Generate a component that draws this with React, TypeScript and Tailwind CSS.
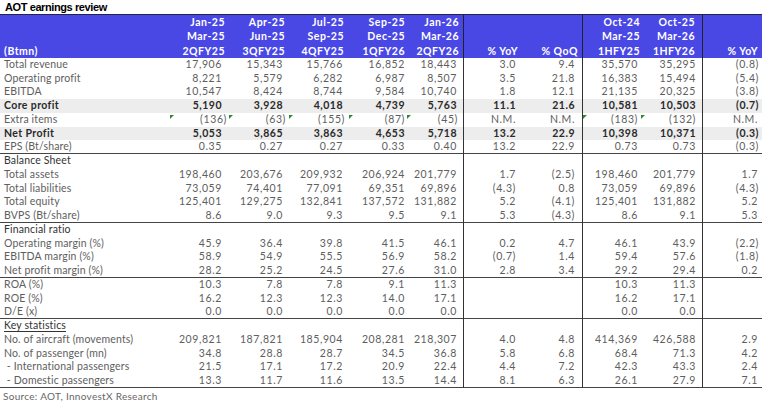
const grid = "grid grid-cols-[170px_59px_60px_60px_58px_56px_60px_59px_59px_61px_60px]";

// right padding per data column, and a smaller one for values in brackets
const padPos = ["pr-[7px]", "pr-[6px]", "pr-[6px]", "pr-[2px]", "pr-[6px]", "pr-[7px]", "pr-[7px]", "pr-[3px]", "pr-[6px]", "pr-[4px]"];
const padNeg = ["pr-[2px]", "pr-[3px]", "pr-[4px]", "pr-[2px]", "pr-[5px]", "pr-[7px]", "pr-[7px]", "pr-[3px]", "pr-[6px]", "pr-[3px]"];
const headPad = ["pr-[4px]", "pr-[4px]", "pr-[5px]", "pr-[2px]", "pr-[4px]", "pr-[5px]", "pr-[4px]", "pr-[1px]", "pr-[7px]", "pr-[4px]"];
const lineCol = [5, 7, 9];

const header = [
  ["", "Jan-25", "Apr-25", "Jul-25", "Sep-25", "Jan-26", "", "", "Oct-24", "Oct-25", ""],
  ["", "Mar-25", "Jun-25", "Sep-25", "Dec-25", "Mar-26", "", "", "Mar-25", "Mar-26", ""],
  ["(Btmn)", "2QFY25", "3QFY25", "4QFY25", "1QFY26", "2QFY26", "% YoY", "% QoQ", "1HFY25", "1HFY26", "% YoY"],
];

type RowData = {
  label: string;
  values?: string[];
  bold?: boolean;
  divider?: boolean;
  section?: boolean;
  underline?: boolean;
  marks?: number[];
};

const rows: RowData[] = [
  { label: "Total revenue", values: ["17,906", "15,343", "15,766", "16,852", "18,443", "3.0", "9.4", "35,570", "35,295", "(0.8)"] },
  { label: "Operating profit", values: ["8,221", "5,579", "6,282", "6,987", "8,507", "3.5", "21.8", "16,383", "15,494", "(5.4)"] },
  { label: "EBITDA", values: ["10,547", "8,424", "8,744", "9,584", "10,740", "1.8", "12.1", "21,135", "20,325", "(3.8)"] },
  { label: "Core profit", bold: true, values: ["5,190", "3,928", "4,018", "4,739", "5,763", "11.1", "21.6", "10,581", "10,503", "(0.7)"] },
  { label: "Extra items", marks: [0, 1, 2, 3, 4, 7, 8], values: ["(136)", "(63)", "(155)", "(87)", "(45)", "N.M.", "N.M.", "(183)", "(132)", "N.M."] },
  { label: "Net Profit", bold: true, values: ["5,053", "3,865", "3,863", "4,653", "5,718", "13.2", "22.9", "10,398", "10,371", "(0.3)"] },
  { label: "EPS (Bt/share)", divider: true, values: ["0.35", "0.27", "0.27", "0.33", "0.40", "13.2", "22.9", "0.73", "0.73", "(0.3)"] },
  { label: "Balance Sheet", section: true },
  { label: "Total assets", values: ["198,460", "203,676", "209,932", "206,924", "201,779", "1.7", "(2.5)", "198,460", "201,779", "1.7"] },
  { label: "Total liabilities", values: ["73,059", "74,401", "77,091", "69,351", "69,896", "(4.3)", "0.8", "73,059", "69,896", "(4.3)"] },
  { label: "Total equity", values: ["125,401", "129,275", "132,841", "137,572", "131,882", "5.2", "(4.1)", "125,401", "131,882", "5.2"] },
  { label: "BVPS (Bt/share)", divider: true, values: ["8.6", "9.0", "9.3", "9.5", "9.1", "5.3", "(4.3)", "8.6", "9.1", "5.3"] },
  { label: "Financial ratio", section: true },
  { label: "Operating margin (%)", values: ["45.9", "36.4", "39.8", "41.5", "46.1", "0.2", "4.7", "46.1", "43.9", "(2.2)"] },
  { label: "EBITDA margin (%)", values: ["58.9", "54.9", "55.5", "56.9", "58.2", "(0.7)", "1.4", "59.4", "57.6", "(1.8)"] },
  { label: "Net profit margin (%)", divider: true, values: ["28.2", "25.2", "24.5", "27.6", "31.0", "2.8", "3.4", "29.2", "29.4", "0.2"] },
  { label: "ROA (%)", values: ["10.3", "7.8", "7.8", "9.1", "11.3", "", "", "10.3", "11.3", ""] },
  { label: "ROE (%)", values: ["16.2", "12.3", "12.3", "14.0", "17.1", "", "", "16.2", "17.1", ""] },
  { label: "D/E (x)", divider: true, values: ["0.0", "0.0", "0.0", "0.0", "0.0", "", "", "0.0", "0.0", ""] },
  { label: "Key statistics", section: true, underline: true },
  { label: "No. of aircraft (movements)", values: ["209,821", "187,821", "185,904", "208,281", "218,307", "4.0", "4.8", "414,369", "426,588", "2.9"] },
  { label: "No. of passenger (mn)", values: ["34.8", "28.8", "28.7", "34.5", "36.8", "5.8", "6.8", "68.4", "71.3", "4.2"] },
  { label: " - International passengers", values: ["21.5", "17.1", "17.2", "20.9", "22.4", "4.4", "7.2", "42.3", "43.3", "2.4"] },
  { label: " - Domestic passengers", divider: true, values: ["13.3", "11.7", "11.6", "13.5", "14.4", "8.1", "6.3", "26.1", "27.9", "7.1"] },
];

function Row({ row }: { row: RowData }) {
  const values = row.values ?? Array(10).fill("");
  return (
    <div
      className={`${grid} h-[13.75px] leading-[13.75px] ${
        row.bold ? "bg-[#ededed] font-bold text-[#2a2a2a] tracking-[0.5px]" : "text-[#5e5e5e] tracking-[0.6px]"
      } ${row.divider ? "border-b border-[#444]" : ""}`}
    >
      <div
        className={`pl-[4px] whitespace-pre ${row.bold ? "tracking-[0.4px]" : "tracking-[0.15px]"} ${
          row.section ? "text-[#333]" : ""
        } ${row.underline ? "underline underline-offset-2" : ""}`}
      >
        {row.label}
      </div>
      {values.map((v, i) => (
        <div
          key={i}
          className={`relative text-right ${v.startsWith("(") ? padNeg[i] : padPos[i]} ${
            lineCol.includes(i) ? "border-l border-[#333]" : ""
          }`}
        >
          {row.marks?.includes(i) && (
            <span className="absolute left-0 top-[2px] border-t-[4px] border-r-[4px] border-t-[#2f8a2f] border-r-transparent" />
          )}
          {v}
        </div>
      ))}
    </div>
  );
}

export default function App() {
  return (
    <div className="w-[762px] h-[405px] bg-white overflow-hidden font-['Lato','Liberation_Sans',sans-serif] text-[10.5px]">
      <div className="h-[14px] pl-[5px] font-['Liberation_Sans',sans-serif] font-bold text-[11px] leading-[14px] tracking-[-0.4px] text-black">
        AOT earnings review
      </div>
      <div className="border-t border-[#23234a] bg-[#4a48e4] text-white font-bold tracking-[0.5px]">
        {header.map((line, r) => (
          <div key={r} className={`${grid} h-[14.3px] leading-[14.3px]`}>
            {line.map((t, i) => (
              <div
                key={i}
                className={`${i === 0 ? "pl-[4px] text-left" : `text-right ${headPad[i - 1]}`} ${
                  lineCol.includes(i - 1) ? "border-l border-[#222]" : ""
                }`}
              >
                {t}
              </div>
            ))}
          </div>
        ))}
      </div>
      {rows.map((row) => (
        <Row key={row.label} row={row} />
      ))}
      <div className="pl-[3px] pt-[2px] text-[10px] tracking-[0.3px] text-[#666] leading-[13px]">
        Source: AOT, InnovestX Research
      </div>
    </div>
  );
}
